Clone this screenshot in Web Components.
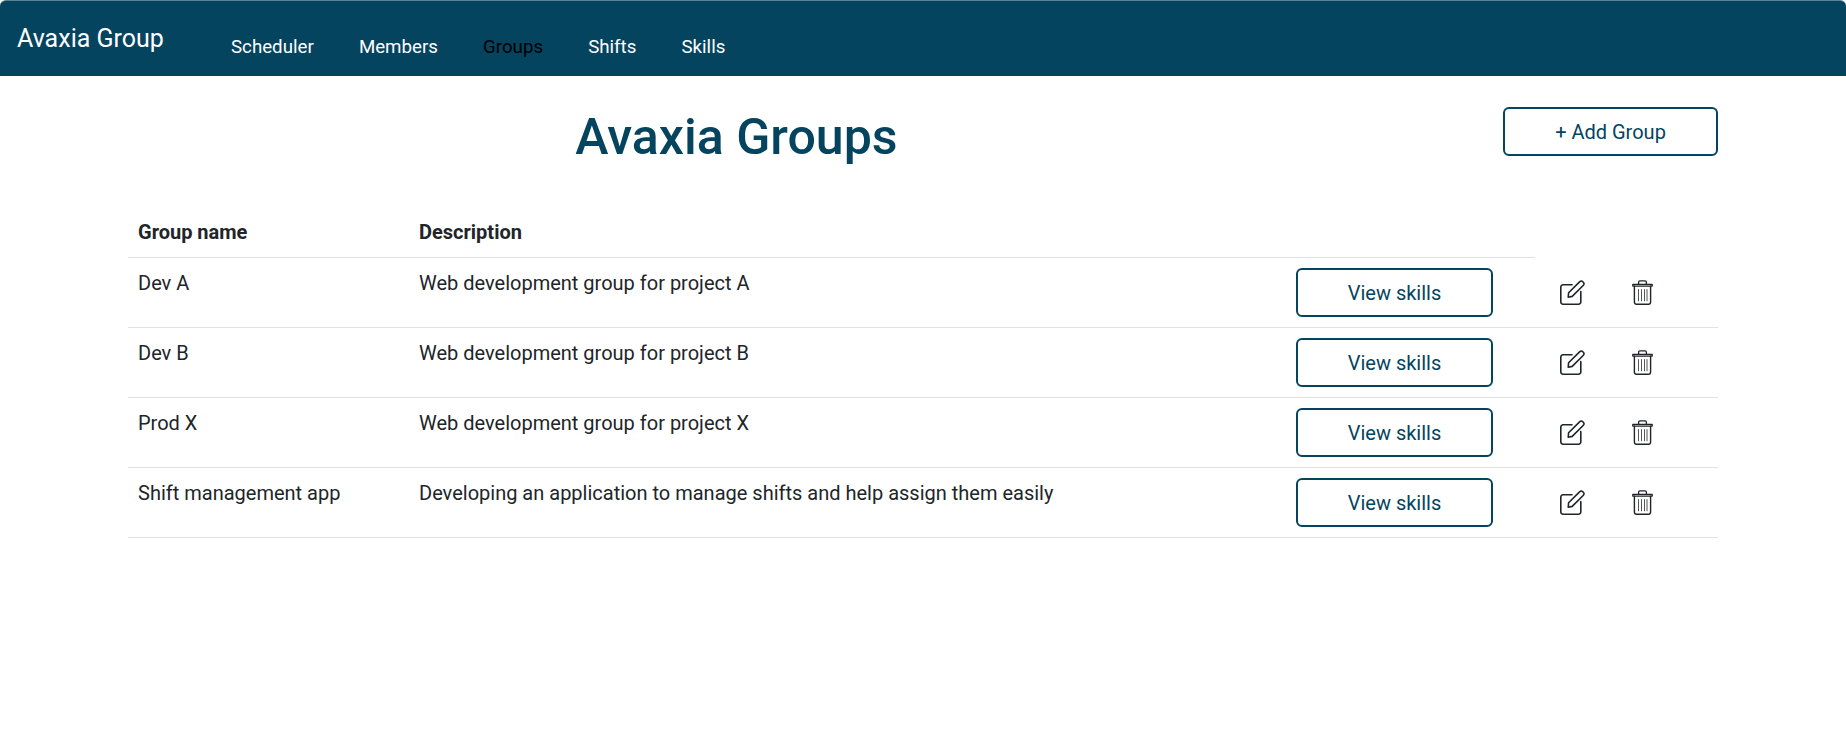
<!DOCTYPE html>
<html><head><meta charset="utf-8"><title>Avaxia Groups</title>
<style>html,body{margin:0;padding:0;background:#fff}body{font-family:Roboto,sans-serif;color:#212529}</style></head>
<body>
<app-page></app-page>
<template id="nav-t"><style>
:host{display:flex;align-items:flex-start;height:76px;box-sizing:border-box;background:#04445f;border-radius:6px 6px 0 0;border-top:1px solid #5b8294;padding-left:17px;font-family:Roboto,sans-serif}
.brand{font-size:25px;line-height:36px;color:#fff;margin-top:20px;width:214px;flex:none}
nav{display:flex;gap:45.1px;margin-top:34px}
a{font-size:18.72px;line-height:24px;color:#fff;text-decoration:none}
a.on{color:#000}
</style><span class="brand">Avaxia Group</span><nav><a>Scheduler</a><a>Members</a><a class="on">Groups</a><a>Shifts</a><a>Skills</a></nav></template>
<template id="btn-t"><style>
:host{display:inline-flex;align-items:center;justify-content:center;box-sizing:border-box;height:49px;border:2px solid #04445f;border-radius:6px;color:#04445f;font:400 20px/1 Roboto,sans-serif;background:#fff}
</style><slot></slot></template>
<template id="icon-t"><style>:host{display:inline-flex}svg{display:block}</style><svg id="s" height="25" fill="none" stroke="#212529" stroke-width="1.6" stroke-linecap="round" stroke-linejoin="round"></svg></template>
<template id="row-t"><style>
:host{display:grid;grid-template-columns:281px 887px 239px 183px;height:70px;box-sizing:border-box;border-bottom:1px solid #dee2e6;font:400 20px/24px Roboto,sans-serif;color:#212529}
.c{padding:13px 8px 0 10px}
.b{padding:10px 0 0 0}
.i{display:flex;gap:47px;padding:21.5px 0 0 25px}
v-btn{width:197px}
</style><div class="c"><slot name="name"></slot></div><div class="c"><slot name="desc"></slot></div><div class="b"><v-btn>View skills</v-btn></div><div class="i"><ui-icon kind="edit"></ui-icon><ui-icon kind="trash"></ui-icon></div></template>
<template id="page-t"><style>
:host{display:block;font-family:Roboto,sans-serif}
main{padding:0 128px}
.top{display:grid;grid-template-columns:1217px 1fr;height:144px}
h1{margin:31px 0 0;text-align:center;font:500 50.1px/60px Roboto,sans-serif;color:#04445f}
.add{justify-self:end;margin-top:31px}
v-btn.a{width:215px}
.th{display:grid;grid-template-columns:281px 1fr;width:1407px;height:37px;border-bottom:1px solid #dee2e6;font:700 20px/24px Roboto,sans-serif;color:#212529}
.th div{padding:0 10px}
</style>
<nav-bar></nav-bar>
<main>
<div class="top"><h1>Avaxia Groups</h1><div class="add"><v-btn class="a">+ Add Group</v-btn></div></div>
<div class="th"><div>Group name</div><div>Description</div></div>
<group-row><span slot="name">Dev A</span><span slot="desc">Web development group for project A</span></group-row>
<group-row><span slot="name">Dev B</span><span slot="desc">Web development group for project B</span></group-row>
<group-row><span slot="name">Prod X</span><span slot="desc">Web development group for project X</span></group-row>
<group-row><span slot="name">Shift management app</span><span slot="desc">Developing an application to manage shifts and help assign them easily</span></group-row>
</main></template>
<script>
function def(name,tid,init){customElements.define(name,class extends HTMLElement{constructor(){super();const r=this.attachShadow({mode:'open'});r.appendChild(document.getElementById(tid).content.cloneNode(true));if(init)init(this,r)}})}
def('nav-bar','nav-t');
def('v-btn','btn-t');
const ICONS={
edit:[25,'<path d="M12 4.8H3a2.2 2.2 0 0 0-2.2 2.2V22a2.2 2.2 0 0 0 2.2 2.2H18.6a2.2 2.2 0 0 0 2.2-2.2V11.5"/><path d="M8.6 12.8 19.8 1.6a2 2 0 0 1 2.9 0l.7.7a2 2 0 0 1 0 2.9L12.2 16.4l-4 .8z"/>'],
trash:[21,'<path d="M.8 4.3h19.4v1.8H.8z" stroke-width="1.3"/><path d="M6.6 4V2.2A1.4 1.4 0 0 1 8 .8h5a1.4 1.4 0 0 1 1.4 1.4V4" stroke-width="1.3"/><path d="M2.4 6.3V22a2.2 2.2 0 0 0 2.2 2.2h11.8a2.2 2.2 0 0 0 2.2-2.2V6.3" stroke-width="1.4"/><path d="M6.5 9.2v12M9.5 9.2v12M12.5 9.2v12M15 9.2v12" stroke-width="1" stroke-linecap="butt" stroke="#555"/>']};
def('ui-icon','icon-t',(h,r)=>{queueMicrotask(()=>{const [w,d]=ICONS[h.getAttribute('kind')];const s=r.getElementById('s');s.setAttribute('width',w);s.setAttribute('viewBox','0 0 '+w+' 25');s.innerHTML=d})});
def('group-row','row-t');
def('app-page','page-t');
</script>
</body></html>
